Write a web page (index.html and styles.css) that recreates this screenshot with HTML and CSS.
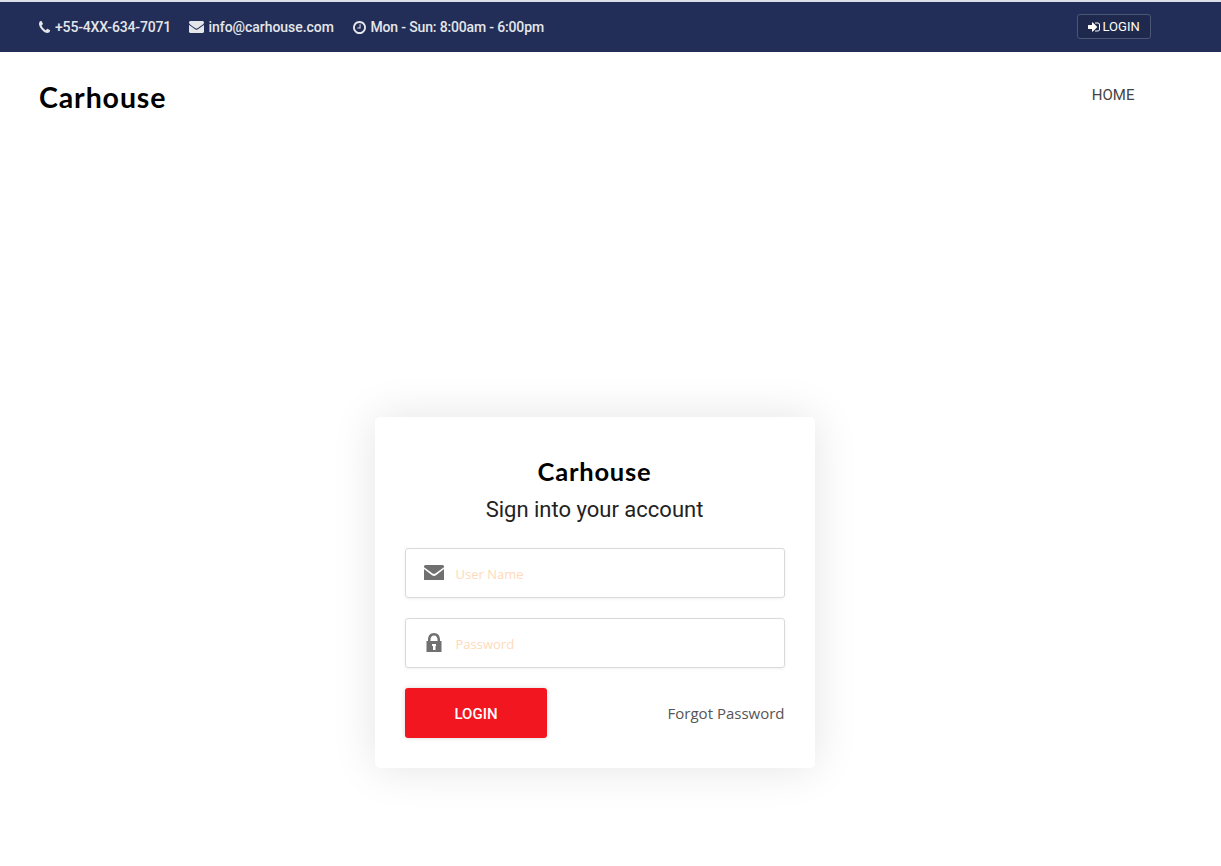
FILE: index.html
```html
<!DOCTYPE html>
<html lang="en">
<head>
<meta charset="utf-8">
<title>Carhouse</title>
<link rel="stylesheet" href="styles.css">
</head>
<body>
<header class="topbar">
  <ul class="contacts">
    <li class="phone"><svg width="11" height="12" viewBox="0 0 1408 1408" preserveAspectRatio="none"><path d="M1408 1112q0 27-10 70.500t-21 68.500q-21 50-122 106-94 51-186 51-27 0-53-3.500t-57.500-12.500-47-14.500-55.500-20.500-49-18q-98-35-175-83-127-79-264-216t-216-264q-48-77-83-175-3-9-18-49t-20.500-55.500-14.500-47-12.500-57.500-3.500-53q0-92 51-186 56-101 106-122 25-11 68.500-21t70.500-10q14 0 21 3 18 6 53 76 11 19 30 54t35 63.500 31 53.500q3 4 17.500 25t21.500 35.500 7 28.500q0 20-28.500 50t-62 55-62 53-28.500 46q0 9 5 22.500t8.500 20.500 14 24 11.500 19q76 137 174 235t235 174q2 1 19 11.500t24 14 20.500 8.500 22.500 5q18 0 46-28.500t53-62 55-62 50-28.500q14 0 28.500 7t35.500 21.500 25 17.500q25 15 53.500 31t63.500 35 54 30q70 35 76 53 3 7 3 21z"/></svg><span>+55-4XX-634-7071</span></li>
    <li class="mail"><svg width="15" height="12" viewBox="0 0 1792 1408" preserveAspectRatio="none"><path d="M1792 454v794q0 66-47 113t-113 47H160q-66 0-113-47T0 1248V454q44 49 101 87 362 246 497 345 57 42 92.500 65.500t94.500 48 110 24.500h2q51 0 110-24.500t94.500-48T1194 886q170-123 498-345 57-39 100-87zM1792 160q0 79-49 151t-122 123q-376 261-468 325-10 7-42.500 30.500t-54 38-52 32.500-57.500 27-50 9h-2q-23 0-50-9t-57.500-27-52-32.500-54-38T639 759q-91-64-262-182.500T172 434q-62-42-117-115.500T0 182q0-78 41.500-130T160 0h1472q65 0 112.500 47t47.500 113z"/></svg><span>info@carhouse.com</span></li>
    <li class="hours"><svg width="13" height="13" viewBox="128 128 1536 1536"><path d="M1024 544v448q0 14-9 23t-23 9H672q-14 0-23-9t-9-23v-64q0-14 9-23t23-9h224V544q0-14 9-23t23-9h64q14 0 23 9t9 23zm416 352q0-148-73-273t-198-198-273-73-273 73-198 198-73 273 73 273 198 198 273 73 273-73 198-198 73-273zm224 0q0 209-103 385.500T1281.500 1561 896 1664t-385.500-103T231 1281.500 128 896t103-385.500T510.500 231 896 128t385.500 103T1561 510.500 1664 896z"/></svg><span>Mon - Sun: 8:00am - 6:00pm</span></li>
  </ul>
  <a class="top-login"><svg width="12" height="10" viewBox="0 0 1536 1280" preserveAspectRatio="none"><path d="M1184 640q0 26-19 45l-544 544q-19 19-45 19t-45-19-19-45V896H64q-26 0-45-19T0 832V448q0-26 19-45t45-19h448V96q0-26 19-45t45-19 45 19l544 544q19 19 19 45zM1536 352v576q0 119-84.500 203.500T1248 1216H928q-40 0-32-64-8-64 32-64h320q66 0 113-47t47-113V352q0-66-47-113t-113-47H928q-40 0-32-64-8-64 32-64h320q119 0 203.500 84.500T1536 352z"/></svg><span>LOGIN</span></a>
</header>
<nav class="navbar">
  <a class="brand">Carhouse</a>
  <a class="nav-link">HOME</a>
</nav>
<main class="page">
  <form class="card">
    <div class="brand brand-small">Carhouse</div>
    <h1 class="heading">Sign into your account</h1>
    <label class="field">
      <svg width="20" height="16" viewBox="0 0 20 16"><path d="M0 2.200V1.500Q0 0 1.500 0h17Q20 0 20 1.500v.7L11.300 8.600Q10 9.500 8.700 8.600zM0 4l8 6.300q2 1.400 4 0L20 4v11H0z"/></svg>
      <input class="input" type="text" placeholder="User Name">
    </label>
    <label class="field">
      <svg width="20" height="20" viewBox="0 0 20 20"><path fill-rule="evenodd" d="M4 8V6.500C4 2.800 6.400 0 10 0s6 2.800 6 6.500V8h1.500v11h-15V8zM6.500 8h7V6.500C13.500 4.200 12.200 2.500 10 2.500S6.500 4.200 6.500 6.500zM8 11v2h1v4h2.500v-4h.5v-2z"/></svg>
      <input class="input" type="password" placeholder="Password">
    </label>
    <div class="actions">
      <button class="submit" type="button">LOGIN</button>
      <a class="forgot">Forgot Password</a>
    </div>
  </form>
</main>
</body>
</html>
```
FILE: styles.css
```css
* { box-sizing: border-box; }
body { margin: 0; min-height: 100vh; background: #fff; font-family: Roboto, "Liberation Sans", sans-serif; }
svg { display: block; fill: currentColor; flex: none; }
.topbar { height: 52px; border-top: 2px solid #dcdfe8; background: #222e57; display: flex; justify-content: space-between; align-items: center; padding: 0 70px 0 39px; color: #e4e6ea; }
.contacts { list-style: none; margin: 0; padding: 0; display: flex; gap: 19px; font-size: 14px; font-weight: 500; letter-spacing: -.16px; line-height: 20px; }
.contacts li { display: flex; align-items: center; gap: 5px; white-space: nowrap; }
.phone { width: 131px; }
.mail { width: 145px; }
.mail { letter-spacing: -.05px; }
.contacts .mail, .contacts .hours { gap: 4.500px; }
.top-login { width: 74px; height: 25px; margin-bottom: 1px; border: 1px solid #4c5778; border-radius: 3px; background: #1e294d; display: flex; align-items: center; gap: 2.500px; padding-left: 10px; font-size: 13px; font-weight: 400; color: #fffdf8; }
.navbar { height: 88px; display: flex; justify-content: space-between; align-items: center; padding: 0 86.500px 0 39px; }
.brand { padding-top: 1px; font-family: Lato, sans-serif; font-weight: 700; font-size: 28.500px; line-height: 36px; letter-spacing: .9px; color: #000; }
.nav-link { margin-bottom: 2px; font-size: 15px; color: #444; }
.page { padding: 277px 0 98px 375px; }
.card { width: 440px; height: 351px; padding: 36px 30px 30px; border-radius: 5px; background: #fff; box-shadow: 0 0 45px rgba(0, 0, 0, .11); }
.brand-small { margin-right: 1px; padding-top: 0; font-size: 25.500px; letter-spacing: .8px; text-align: center; }
.heading { margin: 6px 1px 24px 0; font-size: 22px; font-weight: 400; line-height: 29px; text-align: center; color: #222; }
.field { height: 50px; margin-bottom: 20px; border: 1px solid #d9dadb; border-radius: 3px; box-shadow: 0 1px 3px rgba(0, 0, 0, .06); display: flex; align-items: center; gap: 11.500px; padding: 0 18px; color: #707070; }
.input { flex: 1; min-width: 0; border: 0; outline: 0; padding: 2px 0 0; background: none; font: 13px "Open Sans", sans-serif; }
.input::placeholder { color: #ffdab9; opacity: 1; }
.actions { display: flex; justify-content: space-between; align-items: center; }
.submit { width: 142px; height: 50px; padding: 2px 0 0; border: 0; border-radius: 3px; background: #f21620; color: #fff; font: 500 15px Roboto, sans-serif; box-shadow: 0 0 5px rgba(0, 0, 0, .15); }
.forgot { padding-right: .5px; font-family: "Open Sans", sans-serif; font-size: 15px; color: #555; }
```
